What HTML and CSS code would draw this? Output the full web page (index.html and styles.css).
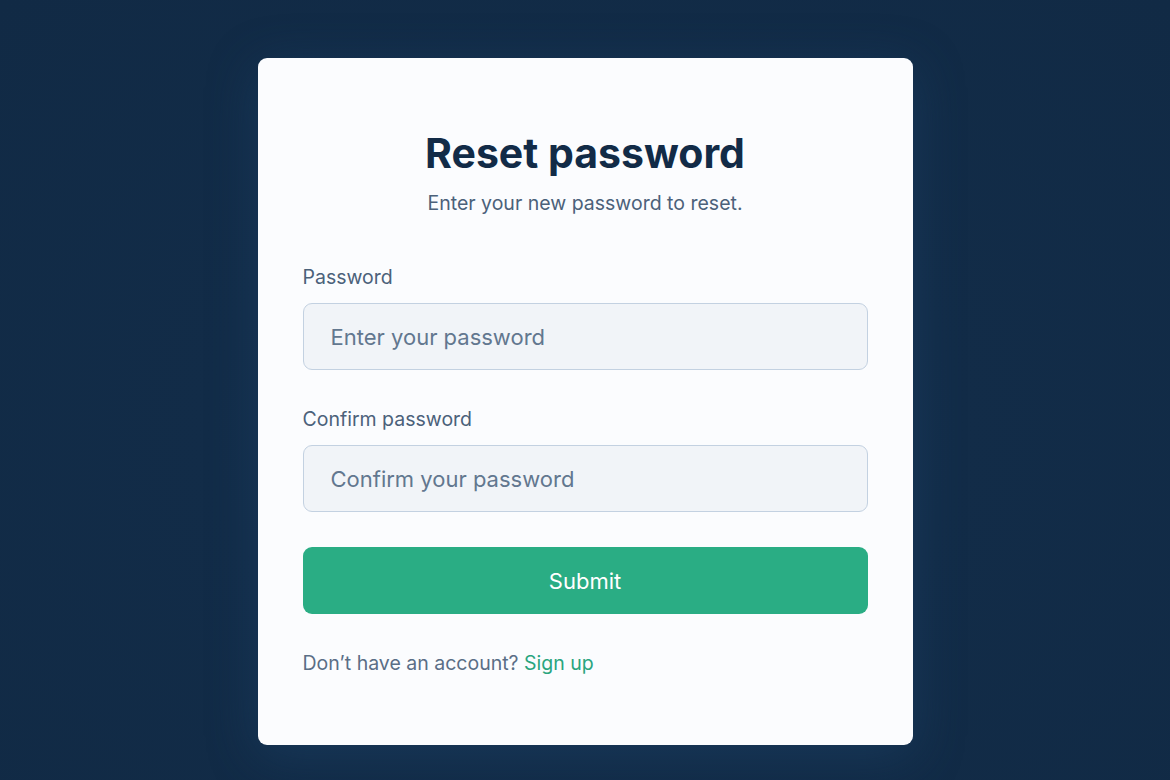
FILE: index.html
```html
<!DOCTYPE html>
<html lang="en">
<head>
<meta charset="utf-8">
<title>Reset password</title>
<link rel="stylesheet" href="styles.css">
</head>
<body>
<main class="page">
  <section class="card">
    <h1 class="title">Reset password</h1>
    <p class="subtitle">Enter your new password to reset.</p>
    <form class="form">
      <label class="field">
        <span class="label">Password</span>
        <input class="input" type="password" placeholder="Enter your password">
      </label>
      <label class="field field-second">
        <span class="label">Confirm password</span>
        <input class="input" type="password" placeholder="Confirm your password">
      </label>
      <button class="submit" type="button">Submit</button>
    </form>
    <p class="footer">Don’t have an account? <a class="link" href="#">Sign up</a></p>
  </section>
</main>
</body>
</html>
```

FILE: styles.css
```css
* { box-sizing: border-box; }
html, body { margin: 0; padding: 0; }
body {
  width: 1170px;
  height: 780px;
  overflow: hidden;
  font-family: "Inter", "Noto Sans", sans-serif;
  background: radial-gradient(ellipse at 50% 55%, #143250 0%, #122c48 45%, #112a45 100%);
}
.page {
  height: 780px;
  display: flex;
  justify-content: center;
  padding-top: 58px;
}
.card {
  width: 655px;
  height: 687px;
  background: #fbfcfe;
  border-radius: 9px;
  padding: 71px 45px 0;
  box-shadow: 0 10px 50px rgba(30, 70, 110, 0.45);
  display: flex;
  flex-direction: column;
}
.title {
  margin: 0;
  text-align: center;
  font-size: 41px;
  line-height: 48px;
  font-weight: 700;
  color: #122b47;
  letter-spacing: 0;
}
.subtitle {
  margin: 13px 0 0;
  text-align: center;
  font-size: 19.5px;
  line-height: 26px;
  color: #4b617a;
}
.form {
  margin-top: 49px;
  display: flex;
  flex-direction: column;
}
.field {
  display: flex;
  flex-direction: column;
  gap: 14px;
}
.field-second { margin-top: 37px; }
.label {
  font-size: 19.5px;
  line-height: 24px;
  color: #4b617a;
}
.input {
  height: 67px;
  border: 1px solid #c3d1e1;
  border-radius: 9px;
  background: #f1f4f8;
  padding: 0 27px;
  font-family: inherit;
  font-size: 22px;
  color: #122b47;
  outline: none;
}
.input::placeholder { color: #62778f; }
.submit {
  margin-top: 35px;
  height: 67px;
  border: none;
  border-radius: 9px;
  background: #2aad84;
  color: #ffffff;
  font-family: inherit;
  font-size: 22px;
}
.footer {
  margin: 37px 0 0;
  font-size: 19.5px;
  line-height: 24px;
  color: #5a6e86;
}
.link {
  color: #2aa57e;
  text-decoration: none;
}
```
